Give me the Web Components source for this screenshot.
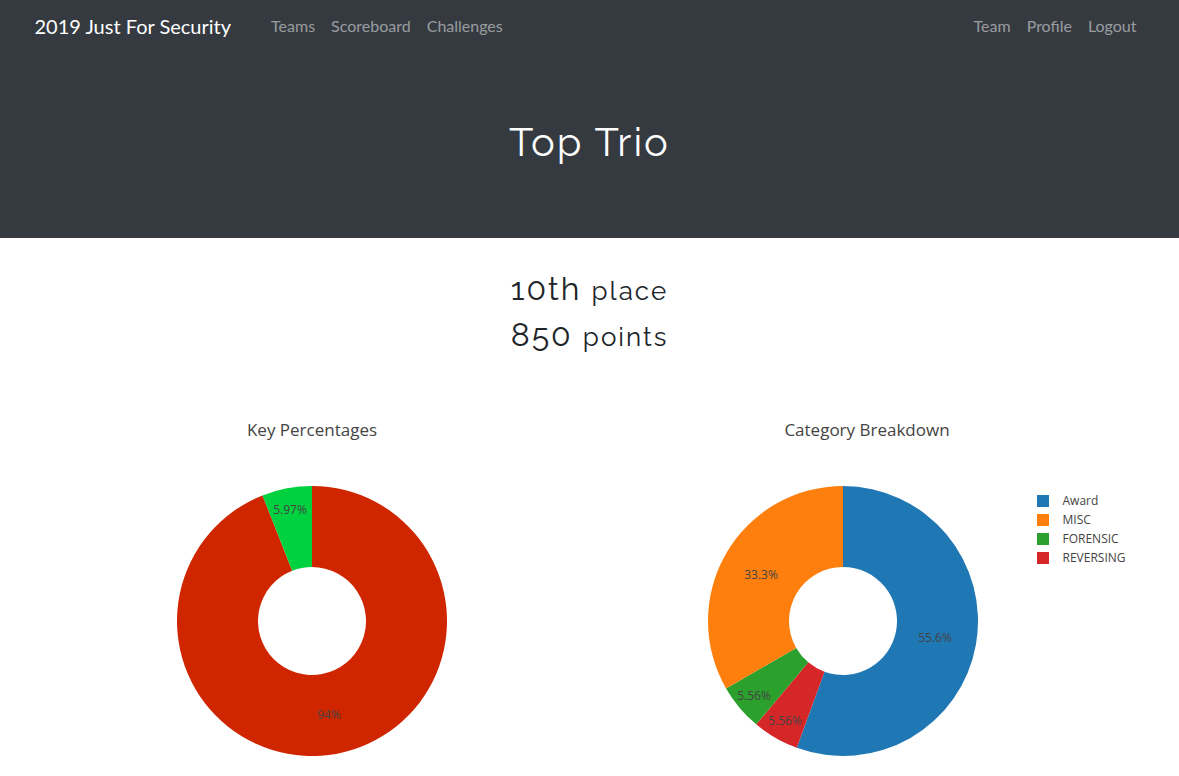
<!DOCTYPE html>
<html lang="en">
<head>
<meta charset="utf-8">
<meta name="viewport" content="width=device-width, initial-scale=1">
<title>2019 Just For Security</title>
<style>
  body { margin: 0; background: #fff; color: #212529; font: 16px/24px Lato, "Open Sans", sans-serif; }
</style>
</head>
<body>
<site-nav>
  <a slot="brand" href="#home">2019 Just For Security</a>
  <nav-link slot="start" href="#teams">Teams</nav-link>
  <nav-link slot="start" href="#scoreboard">Scoreboard</nav-link>
  <nav-link slot="start" href="#challenges">Challenges</nav-link>
  <nav-link slot="end" href="#team">Team</nav-link>
  <nav-link slot="end" href="#profile">Profile</nav-link>
  <nav-link slot="end" href="#logout">Logout</nav-link>
</site-nav>
<main>
  <page-hero>Top Trio</page-hero>
  <team-standing>
    <team-stat unit="place">10th</team-stat>
    <team-stat unit="points">850</team-stat>
  </team-standing>
  <chart-row>
    <donut-chart heading="Key Percentages">
      <data value="94.03" data-color="#cf2600" data-x="152" data-y="233">94%</data>
      <data value="5.97" data-color="#00d13f" data-x="113" data-y="28">5.97%</data>
    </donut-chart>
    <donut-chart heading="Category Breakdown" legend>
      <data value="55.56" data-color="#1f77b4" data-x="227" data-y="156">55.6%</data>
      <data value="5.56" data-color="#d62728" data-x="77" data-y="239">5.56%</data>
      <data value="5.56" data-color="#2ca02c" data-x="46" data-y="214">5.56%</data>
      <data value="33.32" data-color="#ff7f0e" data-x="53" data-y="93">33.3%</data>
      <legend-item slot="legend" color="#1f77b4">Award</legend-item>
      <legend-item slot="legend" color="#ff7f0e">MISC</legend-item>
      <legend-item slot="legend" color="#2ca02c">FORENSIC</legend-item>
      <legend-item slot="legend" color="#d62728">REVERSING</legend-item>
    </donut-chart>
  </chart-row>
</main>

<script>
  class SiteNav extends HTMLElement {
    constructor() {
      super();
      this.attachShadow({ mode: "open" }).innerHTML = `
        <style>
          :host { display: block; background: #343a40; }
          nav { display: flex; align-items: center; box-sizing: border-box; max-width: 1140px; margin: 0 auto; padding: 6px 15px 8px; }
          ::slotted(a) { color: #fff; font-size: 20px; line-height: 30px; text-decoration: none; white-space: nowrap; margin-right: 32px; }
          div { display: flex; }
          .end { margin-left: auto; }
        </style>
        <nav>
          <slot name="brand"></slot>
          <div><slot name="start"></slot></div>
          <div class="end"><slot name="end"></slot></div>
        </nav>`;
    }
  }

  class NavLink extends HTMLElement {
    constructor() {
      super();
      this.attachShadow({ mode: "open" }).innerHTML = `
        <style>
          :host { display: block; }
          a { display: block; padding: 8px; color: rgba(255, 255, 255, .5); text-decoration: none; }
          a:hover { color: rgba(255, 255, 255, .75); }
        </style>
        <a><slot></slot></a>`;
      this.shadowRoot.querySelector("a").href = this.getAttribute("href");
    }
  }

  class PageHero extends HTMLElement {
    constructor() {
      super();
      this.attachShadow({ mode: "open" }).innerHTML = `
        <style>
          :host { display: block; padding: 64px 32px; background: #343a40; color: #fff; text-align: center; }
          h1 { margin: 0 0 8px; font: 400 40px/48px Raleway, Lato, sans-serif; letter-spacing: 2px; }
        </style>
        <h1><slot></slot></h1>`;
    }
  }

  class TeamStanding extends HTMLElement {
    constructor() {
      super();
      this.attachShadow({ mode: "open" }).innerHTML = `
        <style>
          :host { display: grid; gap: 8px; padding: 32px 15px; text-align: center; }
        </style>
        <slot></slot>`;
    }
  }

  class TeamStat extends HTMLElement {
    constructor() {
      super();
      this.attachShadow({ mode: "open" }).innerHTML = `
        <style>
          :host { display: block; }
          h2 { margin: 0; font: 400 32px/38px Raleway, Lato, sans-serif; letter-spacing: 2px; }
          small { font-size: 26px; line-height: 26px; }
        </style>
        <h2><slot></slot> <small></small></h2>`;
      this.shadowRoot.querySelector("small").textContent = this.getAttribute("unit");
    }
  }

  class ChartRow extends HTMLElement {
    constructor() {
      super();
      this.attachShadow({ mode: "open" }).innerHTML = `
        <style>
          :host { display: grid; grid-template-columns: repeat(auto-fit, minmax(480px, 1fr)); box-sizing: border-box; max-width: 1140px; margin: 0 auto; padding: 0 15px; }
        </style>
        <slot></slot>`;
    }
  }

  class LegendItem extends HTMLElement {
    constructor() {
      super();
      this.attachShadow({ mode: "open" }).innerHTML = `
        <style>
          :host { display: flex; align-items: center; gap: 14px; }
          i { width: 12px; height: 12px; }
        </style>
        <i></i><span><slot></slot></span>`;
      this.shadowRoot.querySelector("i").style.background = this.getAttribute("color");
    }
  }

  class DonutChart extends HTMLElement {
    constructor() {
      super();
      this.attachShadow({ mode: "open" }).innerHTML = `
        <style>
          :host { display: block; color: #444; font-family: "Open Sans", sans-serif; }
          figure { margin: 0; }
          figcaption { padding: 32px 0 44px; font-size: 17px; line-height: 24px; text-align: center; }
          .plot { display: flex; justify-content: center; padding-bottom: 20px; }
          svg { display: block; width: 270px; height: 270px; }
          text { font-size: 12px; text-anchor: middle; fill: #444; }
          .legend { display: none; }
          :host([legend]) .plot { display: grid; grid-template-columns: 1fr 129px; justify-items: center; padding-left: 80px; }
          :host([legend]) .legend { display: block; justify-self: start; padding: 5px 0 0 21px; font-size: 12px; line-height: 19px; }
        </style>
        <figure>
          <figcaption></figcaption>
          <div class="plot">
            <svg viewBox="0 0 270 270" role="img"></svg>
            <div class="legend"><slot name="legend"></slot></div>
          </div>
        </figure>`;
    }

    connectedCallback() {
      const heading = this.getAttribute("heading");
      this.shadowRoot.querySelector("figcaption").textContent = heading;
      const svg = this.shadowRoot.querySelector("svg");
      svg.setAttribute("aria-label", heading);
      const slices = [...this.querySelectorAll("data")];
      const total = slices.reduce((sum, s) => sum + Number(s.value), 0);
      const point = (radius, turn) => {
        const angle = turn * 2 * Math.PI;
        return `${135 + radius * Math.sin(angle)} ${135 - radius * Math.cos(angle)}`;
      };
      let from = 0, shapes = "", labels = "";
      for (const s of slices) {
        const to = from + s.value / total;
        const large = to - from > 0.5 ? 1 : 0;
        shapes += `<path fill="${s.dataset.color}" d="M${point(54, from)} L${point(135, from)} A135 135 0 ${large} 1 ${point(135, to)} L${point(54, to)} A54 54 0 ${large} 0 ${point(54, from)}Z"/>`;
        labels += `<text x="${s.dataset.x}" y="${s.dataset.y}">${s.textContent}</text>`;
        from = to;
      }
      svg.innerHTML = shapes + labels;
    }
  }

  customElements.define("site-nav", SiteNav);
  customElements.define("nav-link", NavLink);
  customElements.define("page-hero", PageHero);
  customElements.define("team-standing", TeamStanding);
  customElements.define("team-stat", TeamStat);
  customElements.define("chart-row", ChartRow);
  customElements.define("legend-item", LegendItem);
  customElements.define("donut-chart", DonutChart);
</script>
</body>
</html>
